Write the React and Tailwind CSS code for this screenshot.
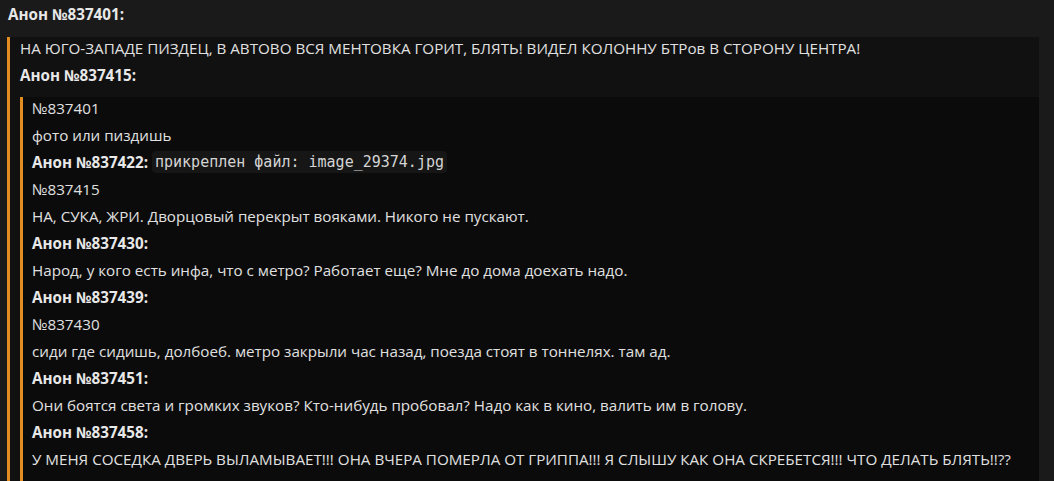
import React from "react";

const font = { fontFamily: '"Open Sans", "Noto Sans", sans-serif' };

function Line({ children, bold }) {
  return (
    <p className={"leading-[22px] whitespace-nowrap " + (bold ? "font-bold text-[#e8e8e8]" : "text-[#e0e0e0]")}>
      {children}
    </p>
  );
}

export default function App() {
  return (
    <div
      className="h-[481px] w-[1054px] overflow-hidden bg-[#1a1a1a] pl-[8px] pr-[15px] pt-[3px] text-[15.2px]"
      style={font}
    >
      <Line bold>Анон №837401:</Line>
      <div className="mt-[12px] border-l-[3px] border-[#e38c22] bg-[#111111] pl-[10px] flex flex-col gap-[5px] ml-[-1px]">
        <Line>НА ЮГО-ЗАПАДЕ ПИЗДЕЦ, В АВТОВО ВСЯ МЕНТОВКА ГОРИТ, БЛЯТЬ! ВИДЕЛ КОЛОННУ БТРов В СТОРОНУ ЦЕНТРА!</Line>
        <Line bold>Анон №837415:</Line>
        <div className="mt-[6px] border-l-[3px] border-[#e38c22] bg-[#0b0b0b] pl-[9px] flex flex-col gap-[5px]">
          <Line>№837401</Line>
          <Line>фото или пиздишь</Line>
          <p className="h-[22px] leading-[22px] whitespace-nowrap text-[#e0e0e0] flex items-center">
            <span className="font-bold text-[#e8e8e8]">Анон №837422:</span>
            <span
              className="ml-[4px] rounded-[4px] bg-[#161616] px-[3px] text-[15px] leading-[22px] text-[#d4d4d4]"
              style={{ fontFamily: '"DejaVu Sans Mono", monospace' }}
            >
              прикреплен файл: image_29374.jpg
            </span>
          </p>
          <Line>№837415</Line>
          <Line>НА, СУКА, ЖРИ. Дворцовый перекрыт вояками. Никого не пускают.</Line>
          <Line bold>Анон №837430:</Line>
          <Line>Народ, у кого есть инфа, что с метро? Работает еще? Мне до дома доехать надо.</Line>
          <Line bold>Анон №837439:</Line>
          <Line>№837430</Line>
          <Line>сиди где сидишь, долбоеб. метро закрыли час назад, поезда стоят в тоннелях. там ад.</Line>
          <Line bold>Анон №837451:</Line>
          <Line>Они боятся света и громких звуков? Кто-нибудь пробовал? Надо как в кино, валить им в голову.</Line>
          <Line bold>Анон №837458:</Line>
          <Line>У МЕНЯ СОСЕДКА ДВЕРЬ ВЫЛАМЫВАЕТ!!! ОНА ВЧЕРА ПОМЕРЛА ОТ ГРИППА!!! Я СЛЫШУ КАК ОНА СКРЕБЕТСЯ!!! ЧТО ДЕЛАТЬ БЛЯТЬ!!??</Line>
          <Line>держись там, забаррикадируй дверь шкафом и не открывай никому, слышишь, никому</Line>
        </div>
      </div>
    </div>
  );
}
